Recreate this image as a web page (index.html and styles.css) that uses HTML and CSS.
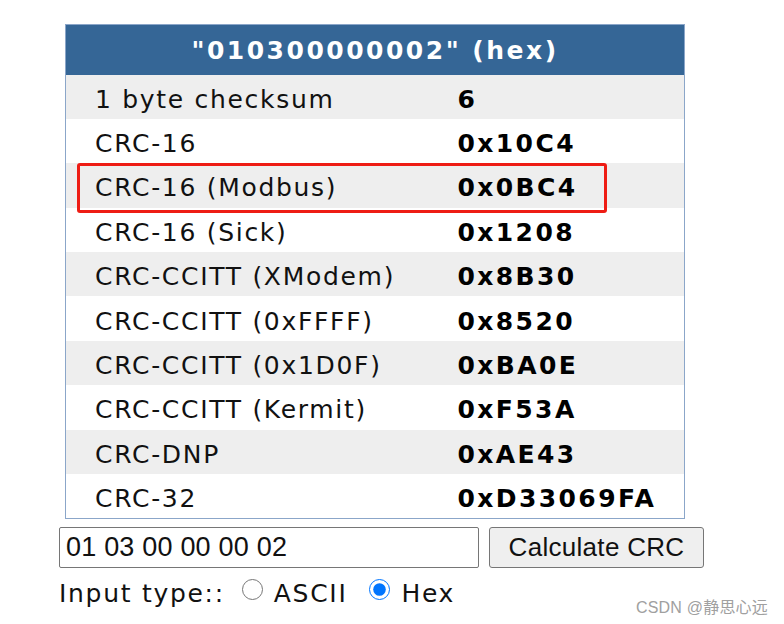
FILE: index.html
```html
<!DOCTYPE html>
<html>

<head>
  <meta charset="utf-8">
  <title>CRC Calculator</title>
  <meta name="viewport" content="width=device-width, initial-scale=1">
  <link rel="stylesheet" href="styles.css">
</head>

<body>
  <div id="page">
    <table id="results">
      <tr>
        <th colspan="2">"010300000002" (hex)</th>
      </tr>
      <tr class="odd">
        <td class="name">1 byte checksum</td>
        <td class="value">6</td>
      </tr>
      <tr>
        <td class="name">CRC-16</td>
        <td class="value">0x10C4</td>
      </tr>
      <tr class="odd">
        <td class="name">CRC-16 (Modbus)</td>
        <td class="value">0x0BC4</td>
      </tr>
      <tr>
        <td class="name">CRC-16 (Sick)</td>
        <td class="value">0x1208</td>
      </tr>
      <tr class="odd">
        <td class="name">CRC-CCITT (XModem)</td>
        <td class="value">0x8B30</td>
      </tr>
      <tr>
        <td class="name">CRC-CCITT (0xFFFF)</td>
        <td class="value">0x8520</td>
      </tr>
      <tr class="odd">
        <td class="name">CRC-CCITT (0x1D0F)</td>
        <td class="value">0xBA0E</td>
      </tr>
      <tr>
        <td class="name">CRC-CCITT (Kermit)</td>
        <td class="value">0xF53A</td>
      </tr>
      <tr class="odd">
        <td class="name">CRC-DNP</td>
        <td class="value">0xAE43</td>
      </tr>
      <tr>
        <td class="name">CRC-32</td>
        <td class="value">0xD33069FA</td>
      </tr>
    </table>

    <div class="highlight"></div>

    <form class="calc">
      <div class="input-row">
        <input type="text" id="data" value="01 03 00 00 00 02">
        <input type="button" value="Calculate CRC">
      </div>
      <div class="type-row">
        <span>Input type::</span>
        <input type="radio" name="type" id="ascii">
        <label for="ascii">ASCII</label>
        <input type="radio" name="type" id="hex" checked>
        <label for="hex">Hex</label>
      </div>
    </form>

    <div class="watermark">CSDN @静思心远</div>
  </div>
</body>

</html>
```

FILE: styles.css
```css
* {
  padding: 0px;
  margin: 0px;
  box-sizing: border-box;
}

body {
  background-color: #ffffff;
  font-family: "DejaVu Sans", Verdana, sans-serif;
  color: #111111;
}

#page {
  position: relative;
  width: 784px;
  height: 624px;
  padding: 24px 0 0 59px;
}

#results {
  margin-left: 6px;
  width: 620px;
  border-collapse: collapse;
  border: 1px solid #8ba6c9;
  font-size: 25px;
  letter-spacing: 1.7px;
}

#results th {
  height: 50px;
  padding-top: 2px;
  background-color: #356696;
  color: #ffffff;
  font-weight: bold;
  letter-spacing: 2.5px;
  text-align: center;
}

#results td {
  height: 44.4px;
  padding: 5px 0 0 0;
}

#results tr.odd td {
  background-color: #eeeeee;
}

#results td.name {
  width: 392px;
  padding-left: 29px;
}

.value {
  font-weight: bold;
  letter-spacing: 2.4px;
  color: #000000;
}

.highlight {
  position: absolute;
  left: 77px;
  top: 163px;
  width: 530px;
  height: 50px;
  border: 3px solid #ee1c14;
  border-radius: 3px;
}

.calc {
  margin-top: 8px;
}

.input-row {
  display: flex;
  gap: 10px;
}

input[type=text] {
  width: 420px;
  height: 41px;
  border: 1px solid #767676;
  border-radius: 2px;
  padding: 0 6px;
  font-family: "Liberation Sans", Arial, sans-serif;
  font-size: 27px;
  letter-spacing: 0.2px;
  color: #111111;
  outline: none;
}

input[type=button] {
  width: 215px;
  height: 41px;
  border: 1px solid #767676;
  border-radius: 3px;
  background-color: #efefef;
  font-family: "Liberation Sans", Arial, sans-serif;
  font-size: 26px;
  letter-spacing: 0.3px;
  color: #111111;
}

.type-row {
  display: flex;
  align-items: center;
  margin-top: 8px;
  font-size: 25px;
  letter-spacing: 1.7px;
  height: 36px;
}

.type-row span {
  margin-right: 17px;
}

input[type=radio] {
  width: 21px;
  height: 21px;
  margin: -8px 11px 0 0;
  accent-color: #0075ff;
}

.type-row label[for=ascii] {
  margin-right: 22px;
}

.watermark {
  position: absolute;
  right: 16px;
  top: 594px;
  font-family: "Liberation Sans", "Noto Sans CJK SC", sans-serif;
  font-size: 16px;
  letter-spacing: 0.2px;
  color: #a0a0a0;
}
```
